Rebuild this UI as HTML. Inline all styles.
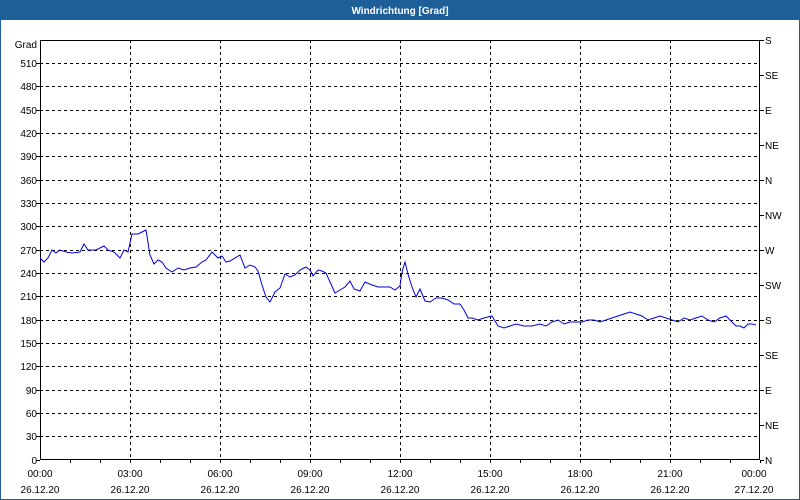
<!DOCTYPE html>
<html><head><meta charset="utf-8"><style>
html,body{margin:0;padding:0;background:#fff}
body{width:800px;height:500px;overflow:hidden;position:relative;font-family:"Liberation Sans",sans-serif}
</style></head><body>
<svg width="800" height="500" viewBox="0 0 800 500" xmlns="http://www.w3.org/2000/svg" style="position:absolute;left:0;top:0" font-family="Liberation Sans, sans-serif" font-size="10">
<rect x="0" y="0" width="800" height="500" fill="#fff"/>
<rect x="0" y="0" width="800" height="20" fill="#1f5f99"/>
<rect x="0.5" y="19.5" width="799" height="480" fill="none" stroke="#1f5f99"/>
<text x="400" y="14" fill="#fff" font-weight="bold" text-anchor="middle" font-size="10">Windrichtung [Grad]</text>
<g stroke="#000" stroke-width="1" stroke-dasharray="3,3" fill="none">
<path d="M40 63.5H760M40 86.5H760M40 110.5H760M40 133.5H760M40 156.5H760M40 180.5H760M40 203.5H760M40 226.5H760M40 250.5H760M40 273.5H760M40 296.5H760M40 320.5H760M40 343.5H760M40 366.5H760M40 390.5H760M40 413.5H760M40 436.5H760"/>
<path d="M130.5 40V460M220.5 40V460M310.5 40V460M400.5 40V460M490.5 40V460M580.5 40V460M670.5 40V460"/>
</g>
<rect x="40.5" y="40.5" width="719" height="419" fill="none" stroke="#000"/>
<g stroke="#000">
<path d="M70.5 460v3M100.5 460v3M130.5 460v3M160.5 460v3M190.5 460v3M220.5 460v3M250.5 460v3M280.5 460v3M310.5 460v3M340.5 460v3M370.5 460v3M400.5 460v3M430.5 460v3M460.5 460v3M490.5 460v3M520.5 460v3M550.5 460v3M580.5 460v3M610.5 460v3M640.5 460v3M670.5 460v3M700.5 460v3M730.5 460v3M760.5 460v3"/>
<path d="M36 63.5h4M36 86.5h4M36 110.5h4M36 133.5h4M36 156.5h4M36 180.5h4M36 203.5h4M36 226.5h4M36 250.5h4M36 273.5h4M36 296.5h4M36 320.5h4M36 343.5h4M36 366.5h4M36 390.5h4M36 413.5h4M36 436.5h4M36 460.5h4"/>
<path d="M760 40.5h4M760 75.5h4M760 110.5h4M760 145.5h4M760 180.5h4M760 215.5h4M760 250.5h4M760 285.5h4M760 320.5h4M760 355.5h4M760 390.5h4M760 425.5h4M760 460.5h4"/>
</g>
<g fill="#000" text-anchor="end">
<text x="37" y="48">Grad</text>
<text x="37" y="67">510</text><text x="37" y="90">480</text><text x="37" y="114">450</text><text x="37" y="137">420</text><text x="37" y="160">390</text><text x="37" y="184">360</text><text x="37" y="207">330</text><text x="37" y="230">300</text><text x="37" y="254">270</text><text x="37" y="277">240</text><text x="37" y="300">210</text><text x="37" y="324">180</text><text x="37" y="347">150</text><text x="37" y="370">120</text><text x="37" y="394">90</text><text x="37" y="417">60</text><text x="37" y="440">30</text><text x="37" y="464">0</text>
</g>
<g fill="#000">
<text x="765" y="44">S</text><text x="765" y="79">SE</text><text x="765" y="114">E</text><text x="765" y="149">NE</text><text x="765" y="184">N</text><text x="765" y="219">NW</text><text x="765" y="254">W</text><text x="765" y="289">SW</text><text x="765" y="324">S</text><text x="765" y="359">SE</text><text x="765" y="394">E</text><text x="765" y="429">NE</text><text x="765" y="464">N</text>
</g>
<g fill="#000" text-anchor="middle">
<text x="40" y="477">00:00</text><text x="130" y="477">03:00</text><text x="220" y="477">06:00</text><text x="310" y="477">09:00</text><text x="400" y="477">12:00</text><text x="490" y="477">15:00</text><text x="580" y="477">18:00</text><text x="670" y="477">21:00</text><text x="754" y="477">00:00</text>
<text x="40" y="493">26.12.20</text><text x="130" y="493">26.12.20</text><text x="220" y="493">26.12.20</text><text x="310" y="493">26.12.20</text><text x="400" y="493">26.12.20</text><text x="490" y="493">26.12.20</text><text x="580" y="493">26.12.20</text><text x="670" y="493">26.12.20</text><text x="754" y="493">27.12.20</text>
</g>
<polyline fill="none" stroke="#0000e0" stroke-width="1" points="40,258 44,262 48,258 52,250 56,253 60,250 66,252 72,253 80,252 84,244 88,250 96,250 104,246 108,250 114,252 120,258 124,250 128,252 132,234 138,234 142,232 146,230 150,255 154,264 158,260 162,262 166,268 172,272 178,268 184,270 190,268 196,267 202,262 206,260 212,252 218,258 222,256 226,262 230,261 240,255 245,268 250,265 255,267 258,271 262,285 266,297 270,302 275,292 280,288 285,274 290,277 295,275 300,270 306,267 310,270 313,276 318,270 322,271 326,273 330,282 335,293 340,290 345,287 350,281 354,289 360,291 365,282 372,285 378,287 383,287 390,287 395,290 400,286 402,272 405,262 408,274 412,287 416,297 420,289 425,301 430,302 436,298 442,298 448,300 454,304 460,304 464,310 468,318 472,318 478,320 484,318 492,316 498,326 504,328 510,326 516,324 524,326 532,326 540,324 546,326 552,322 558,320 564,324 570,322 576,322 582,322 588,320 594,320 600,322 606,320 612,318 618,316 624,314 630,312 636,314 642,316 648,320 654,318 660,316 666,318 672,320 678,322 684,318 690,320 696,318 702,316 708,320 714,322 720,318 726,316 732,322 736,326 740,326 744,328 748,324 752,324 756,325"/>
</svg>
</body></html>
